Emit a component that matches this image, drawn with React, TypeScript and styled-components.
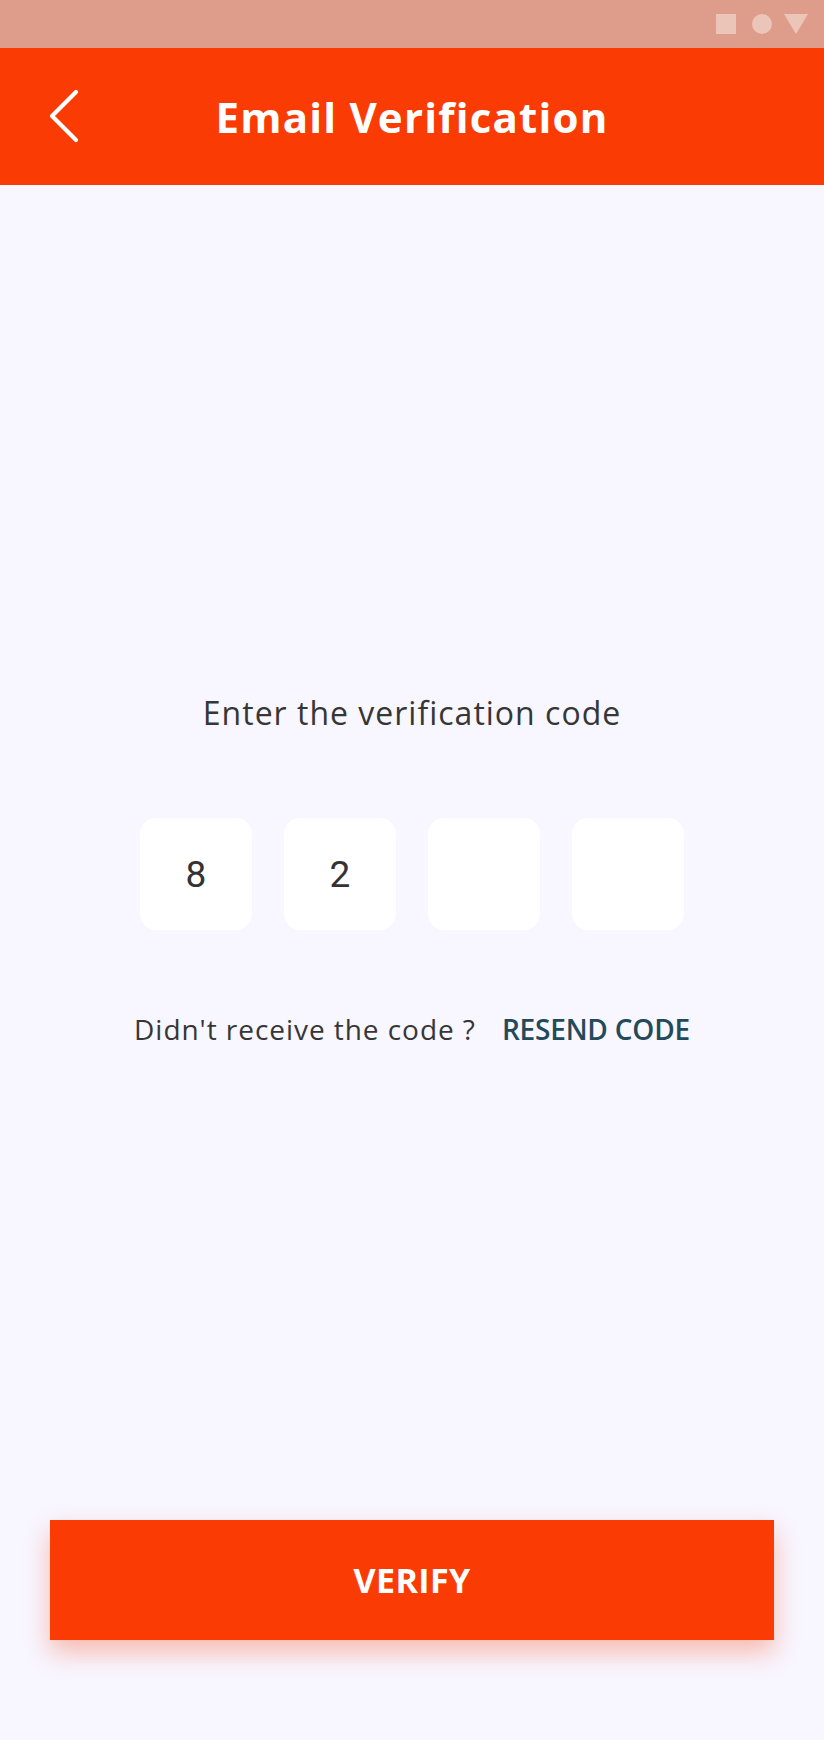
import React from 'react';
import styled, { createGlobalStyle } from 'styled-components';

const GlobalStyle = createGlobalStyle`
  html, body {
    margin: 0;
    padding: 0;
    background: #f8f6ff;
  }
  * {
    box-sizing: border-box;
  }
`;

const BRAND = '#fa3c04';
const SANS = `"Open Sans", "Liberation Sans", sans-serif`;

const code = ['8', '2', '', ''];

function BackIcon() {
  return (
    <svg width="32" height="54" viewBox="0 0 32 54" fill="none">
      <path d="M28 3 L4 27 L28 51" stroke="#fff" strokeWidth="4.2" strokeLinecap="round" strokeLinejoin="round" />
    </svg>
  );
}

function StatusIcons() {
  return (
    <StatusIconRow>
      <svg width="20" height="20" viewBox="0 0 20 20">
        <rect width="20" height="20" fill="#ecc5b9" />
      </svg>
      <svg width="20" height="20" viewBox="0 0 20 20">
        <circle cx="10" cy="10" r="10" fill="#ecc5b9" />
      </svg>
      <svg width="24" height="20" viewBox="0 0 24 20">
        <path d="M0 0 H24 L12 20 Z" fill="#ecc5b9" />
      </svg>
    </StatusIconRow>
  );
}

export default function App() {
  return (
    <>
      <GlobalStyle />
      <Page>
        <StatusBar>
          <StatusIcons />
        </StatusBar>
        <Header>
          <BackButton aria-label="Back">
            <BackIcon />
          </BackButton>
          <Title>Email Verification</Title>
        </Header>

        <Main>
          <Prompt>Enter the verification code</Prompt>
          <CodeRow>
            {code.map((digit, i) => (
              <CodeBox key={i}>{digit}</CodeBox>
            ))}
          </CodeRow>
          <ResendRow>
            <Hint>Didn't receive the code ?</Hint>
            <ResendLink>RESEND CODE</ResendLink>
          </ResendRow>
        </Main>

        <Footer>
          <VerifyButton>VERIFY</VerifyButton>
        </Footer>
      </Page>
    </>
  );
}

const Page = styled.div`
  min-height: 1740px;
  display: flex;
  flex-direction: column;
  background: #f8f6ff;
  font-family: ${SANS};
`;

const StatusBar = styled.div`
  height: 48px;
  background: #de9d8a;
  display: flex;
  justify-content: flex-end;
  align-items: center;
  padding-right: 16px;
`;

const StatusIconRow = styled.div`
  display: flex;
  align-items: center;
  gap: 12px;

  svg {
    display: block;
  }
  svg:first-child {
    margin-right: 4px;
  }
`;

const Header = styled.header`
  position: relative;
  height: 137px;
  background: ${BRAND};
  display: flex;
  align-items: center;
  justify-content: center;
`;

const BackButton = styled.button`
  position: absolute;
  left: 48px;
  top: 41px;
  padding: 0;
  border: 0;
  background: none;
  display: flex;
`;

const Title = styled.h1`
  margin: 0;
  color: #fff;
  font-size: 42px;
  font-weight: 700;
  line-height: 1;
  letter-spacing: 1.2px;
`;

const Main = styled.main`
  flex: 1;
  display: flex;
  flex-direction: column;
  align-items: center;
  padding-top: 512px;
`;

const Prompt = styled.p`
  margin: 0;
  color: #363636;
  font-size: 32px;
  line-height: 32px;
  letter-spacing: 1px;
`;

const CodeRow = styled.div`
  display: flex;
  gap: 32px;
  margin-top: 89px;
`;

const CodeBox = styled.div`
  width: 112px;
  height: 112px;
  border-radius: 16px;
  background: #fff;
  display: flex;
  align-items: center;
  justify-content: center;
  color: #333;
  font-family: Roboto, ${SANS};
  font-size: 37px;
`;

const ResendRow = styled.div`
  display: flex;
  gap: 26px;
  margin-top: 85px;
  font-size: 28px;
  line-height: 28px;
`;

const Hint = styled.span`
  color: #363636;
  letter-spacing: 0.95px;
`;

const ResendLink = styled.span`
  color: #234a59;
  font-weight: 600;
  letter-spacing: -0.2px;
`;

const Footer = styled.footer`
  padding: 0 50px 100px;
`;

const VerifyButton = styled.button`
  width: 100%;
  height: 120px;
  border: 0;
  background: ${BRAND};
  box-shadow: 0 12px 24px rgba(250, 60, 4, 0.32);
  color: #fff;
  font-family: ${SANS};
  font-size: 34px;
  font-weight: 700;
  letter-spacing: 0.4px;
`;
